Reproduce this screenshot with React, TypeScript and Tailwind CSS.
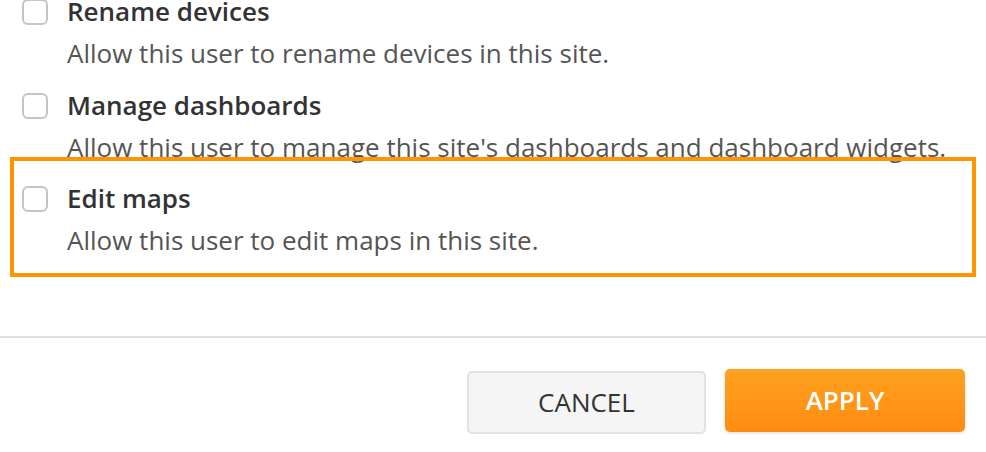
import React from 'react';

const perms = [
  { title: 'Rename devices', desc: 'Allow this user to rename devices in this site.' },
  { title: 'Manage dashboards', desc: "Allow this user to manage this site's dashboards and dashboard widgets." },
  { title: 'Edit maps', desc: 'Allow this user to edit maps in this site.' },
];

function Permission({ title, desc }: { title: string; desc: string }) {
  return (
    <div className="flex items-start gap-[19px] h-[93.5px]">
      <span className="mt-[4px] w-[26px] h-[26px] shrink-0 rounded-[6px] border-2 border-[#c4c4c4] bg-white" />
      <div className="flex flex-col whitespace-nowrap">
        <span className="text-[26px] leading-[32px] font-semibold text-[#333]">{title}</span>
        <span className="mt-[10px] text-[26px] leading-[32px] text-[#555]">{desc}</span>
      </div>
    </div>
  );
}

export default function App() {
  return (
    <div
      className="relative w-[986px] h-[452px] overflow-hidden bg-white"
      style={{ fontFamily: '"Open Sans", "Noto Sans", sans-serif' }}
    >
      {/* permission list */}
      <div className="-mt-[5px] pl-[22px]">
        {perms.map((p) => (
          <Permission key={p.title} {...p} />
        ))}
      </div>

      {/* highlight box */}
      <div className="absolute left-[10px] top-[157px] w-[966px] h-[120px] border-4 border-[#ff9500] pointer-events-none" />

      <div className="mt-[60px] h-[2px] bg-[#dedede]" />

      {/* footer */}
      <div className="flex justify-end items-center gap-[19px] pr-[21px] pt-[33px]">
        <button className="w-[239px] h-[63px] rounded-[5px] border-2 border-[#e2e2e2] bg-[#f5f5f5] text-[26px] text-[#333]">
          CANCEL
        </button>
        <button className="-mt-[3px] w-[240px] h-[63px] rounded-[5px] bg-gradient-to-b from-[#ffa11f] to-[#ff8c12] text-[26px] font-semibold text-white shadow-[0_1px_3px_rgba(0,0,0,0.15)]">
          APPLY
        </button>
      </div>
    </div>
  );
}
